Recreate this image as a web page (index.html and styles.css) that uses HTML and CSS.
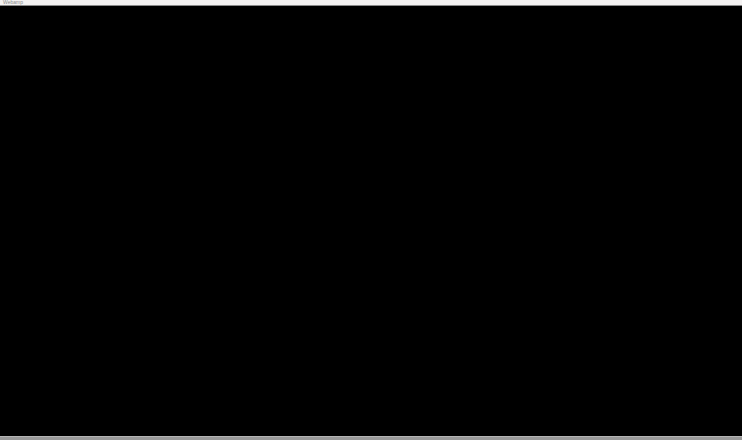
FILE: index.html
```html
<!DOCTYPE html>
<html lang="en">
<head>
    <meta charset="UTF-8">
    <meta name="viewport" content="width=device-width, initial-scale=1.0">
    <title>Player</title>
    <link rel="stylesheet" href="styles.css">
</head>
<body>
    <div class="page">
        <div class="top-bar">
            <span class="top-label">Webamp</span>
        </div>
        <div class="stage"></div>
        <div class="status-bar"></div>
    </div>
</body>
</html>
```

FILE: styles.css
```css
* {
    margin: 0;
    padding: 0;
    box-sizing: border-box;
}

body {
    font-family: 'Liberation Sans', Arial, sans-serif;
    background: #000;
    height: 440px;
    overflow: hidden;
}

.page {
    display: flex;
    flex-direction: column;
    height: 440px;
}

.top-bar {
    height: 6px;
    background: #f4f2f2;
    border-bottom: 1px solid #8a8a8a;
    overflow: hidden;
    padding-left: 3px;
}

.top-label {
    display: block;
    font-size: 5px;
    line-height: 5px;
    color: #8a8a8a;
}

.stage {
    flex: 1;
    background: #000;
}

.status-bar {
    height: 4px;
    background: #9a9a9a;
    border-top: 1px solid #b5b5b5;
}
```
